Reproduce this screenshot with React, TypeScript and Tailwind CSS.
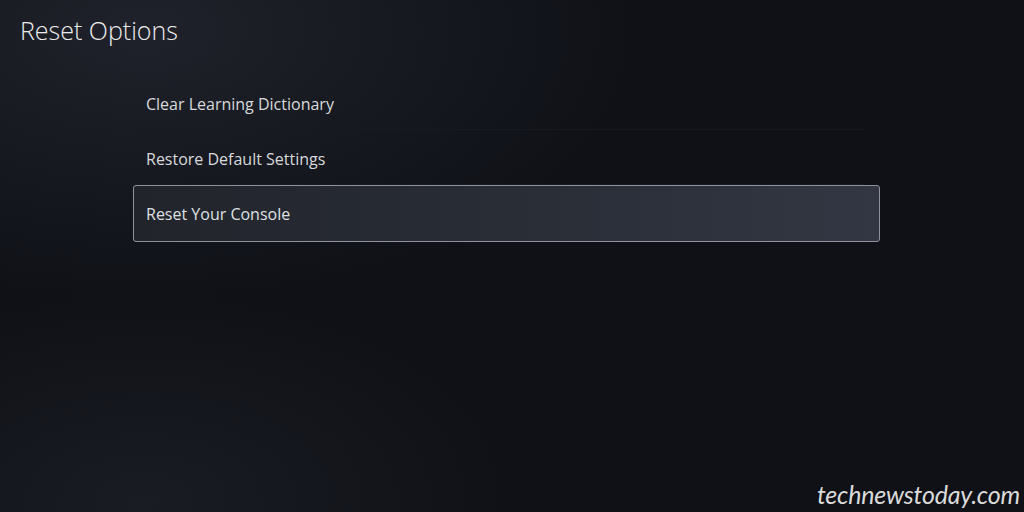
import React from 'react';

const items = ['Clear Learning Dictionary', 'Restore Default Settings', 'Reset Your Console'];

const App: React.FC = () => {
  const selected = 2;

  return (
    <div
      className="relative w-[1024px] h-[512px] overflow-hidden bg-[#0f1117] text-[#e6e6e8]"
      style={{ fontFamily: '"Open Sans", "Noto Sans", sans-serif' }}
    >
      {/* soft glows in the background */}
      <div className="absolute inset-0 bg-[radial-gradient(ellipse_at_14%_6%,#1f222a_0%,transparent_40%)]" />
      <div className="absolute inset-0 bg-[radial-gradient(ellipse_at_14%_98%,#191c22_0%,transparent_30%)]" />

      <div className="relative flex flex-col h-full">
        <h1 className="pl-[20px] pt-[13px] text-[25px] leading-[34px] font-light text-[#ececee]">
          Reset Options
        </h1>

        <ul className="ml-[133px] mt-[28px] w-[747px] flex flex-col">
          {items.map((label, i) =>
            i === selected ? (
              <li
                key={label}
                className="h-[57px] flex items-center pl-[12px] rounded-[3px] border-[1.5px] border-[#8f929a] bg-[linear-gradient(90deg,#21242b_0%,#2a2e37_55%,#333743_100%)] text-[16px] text-[#dfe0e3]"
              >
                {label}
              </li>
            ) : (
              <li key={label} className="h-[55px] pr-[17px]">
                <div className="h-full flex items-center pt-[4px] pl-[13px] border-b border-[#171a20] text-[16px] text-[#d8d9dc]">
                  {label}
                </div>
              </li>
            )
          )}
        </ul>
      </div>

      <div
        className="absolute right-[4px] bottom-[-1px] text-[25px] italic tracking-[-0.2px] text-[#dadada]"
        style={{ fontFamily: 'Lato, "Open Sans", sans-serif' }}
      >
        technewstoday.com
      </div>
    </div>
  );
};

export default App;
